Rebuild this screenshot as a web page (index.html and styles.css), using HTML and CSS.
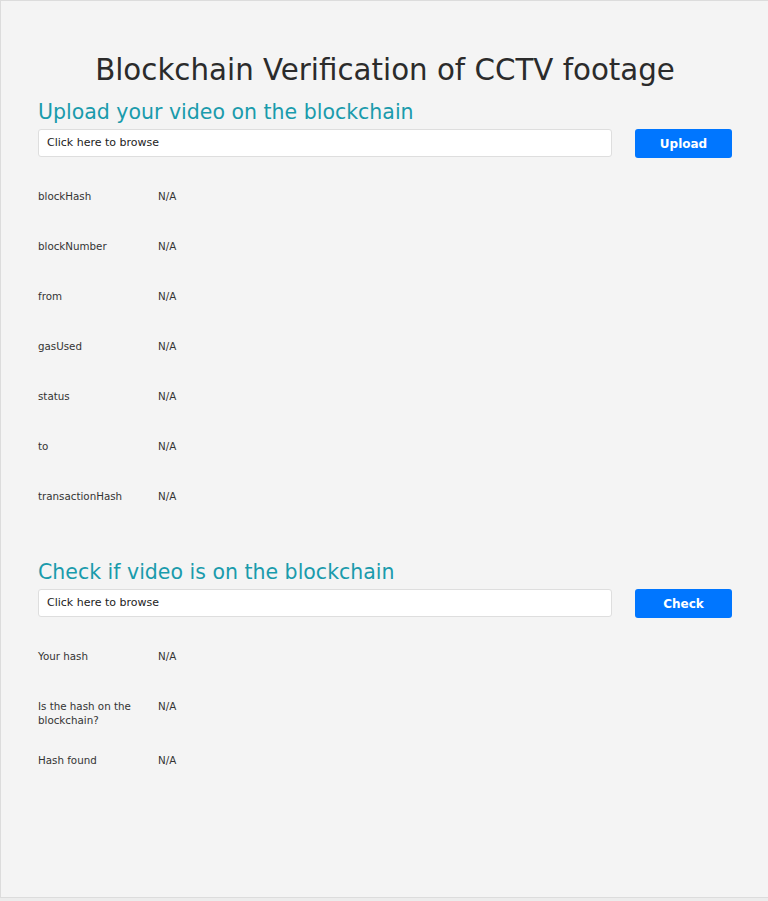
FILE: index.html
```html
<!DOCTYPE html>
<html lang="en">
<head>
    <meta charset="UTF-8">
    <meta name="viewport" content="width=device-width, initial-scale=1.0">
    <title>Blockchain Verification of CCTV footage</title>
    <link rel="stylesheet" href="styles.css">
</head>
<body>
    <div class="page">
        <div class="container">
            <h1 class="title">Blockchain Verification of CCTV footage</h1>

            <h2 class="section-title">Upload your video on the blockchain</h2>
            <div class="file-row">
                <label class="file-input">Click here to browse</label>
                <button class="btn-primary">Upload</button>
            </div>
            <div class="info-list">
                <div class="info-row"><span class="info-label">blockHash</span><span class="info-value">N/A</span></div>
                <div class="info-row"><span class="info-label">blockNumber</span><span class="info-value">N/A</span></div>
                <div class="info-row"><span class="info-label">from</span><span class="info-value">N/A</span></div>
                <div class="info-row"><span class="info-label">gasUsed</span><span class="info-value">N/A</span></div>
                <div class="info-row"><span class="info-label">status</span><span class="info-value">N/A</span></div>
                <div class="info-row"><span class="info-label">to</span><span class="info-value">N/A</span></div>
                <div class="info-row"><span class="info-label">transactionHash</span><span class="info-value">N/A</span></div>
            </div>

            <h2 class="section-title section-gap">Check if video is on the blockchain</h2>
            <div class="file-row">
                <label class="file-input">Click here to browse</label>
                <button class="btn-primary">Check</button>
            </div>
            <div class="info-list">
                <div class="info-row"><span class="info-label">Your hash</span><span class="info-value">N/A</span></div>
                <div class="info-row"><span class="info-label">Is the hash on the blockchain?</span><span class="info-value">N/A</span></div>
                <div class="info-row"><span class="info-label">Hash found</span><span class="info-value">N/A</span></div>
            </div>
        </div>
    </div>
</body>
</html>
```

FILE: styles.css
```css
* {
    margin: 0;
    padding: 0;
    box-sizing: border-box;
}

body {
    font-family: 'DejaVu Sans', Verdana, sans-serif;
    background-color: #ececec;
    color: #212529;
    height: 901px;
}

.page {
    height: 898px;
    background-color: #f4f4f4;
    border: 1px solid #dcdcdc;
    border-right: none;
}

.container {
    padding: 0 36px 0 37px;
}

.title {
    font-size: 29.3px;
    font-weight: 400;
    color: #2b2b2b;
    text-align: center;
    padding-top: 50px;
    line-height: 38px;
}

.section-title {
    font-size: 20.5px;
    font-weight: 400;
    color: #1a9bac;
    line-height: 26px;
    margin-top: 10px;
}

.section-gap {
    margin-top: 38px;
}

.file-row {
    display: flex;
    align-items: flex-start;
    margin-top: 4px;
}

.file-input {
    flex: 1;
    height: 28px;
    background-color: #fff;
    border: 1px solid #dedede;
    border-radius: 3px;
    font-size: 11px;
    line-height: 26px;
    padding-left: 8px;
    color: #222;
}

.btn-primary {
    width: 97px;
    height: 29px;
    margin-left: 23px;
    border: none;
    border-radius: 3px;
    background-color: #0076ff;
    color: #fff;
    font-family: inherit;
    font-size: 12px;
    font-weight: 700;
}

.info-list {
    margin-top: 13px;
}

.info-row {
    display: flex;
    min-height: 50px;
    padding: 18px 0 8px;
    font-size: 10.3px;
    line-height: 14px;
    color: #333;
}

.info-label {
    width: 120px;
    padding-right: 15px;
}
```
